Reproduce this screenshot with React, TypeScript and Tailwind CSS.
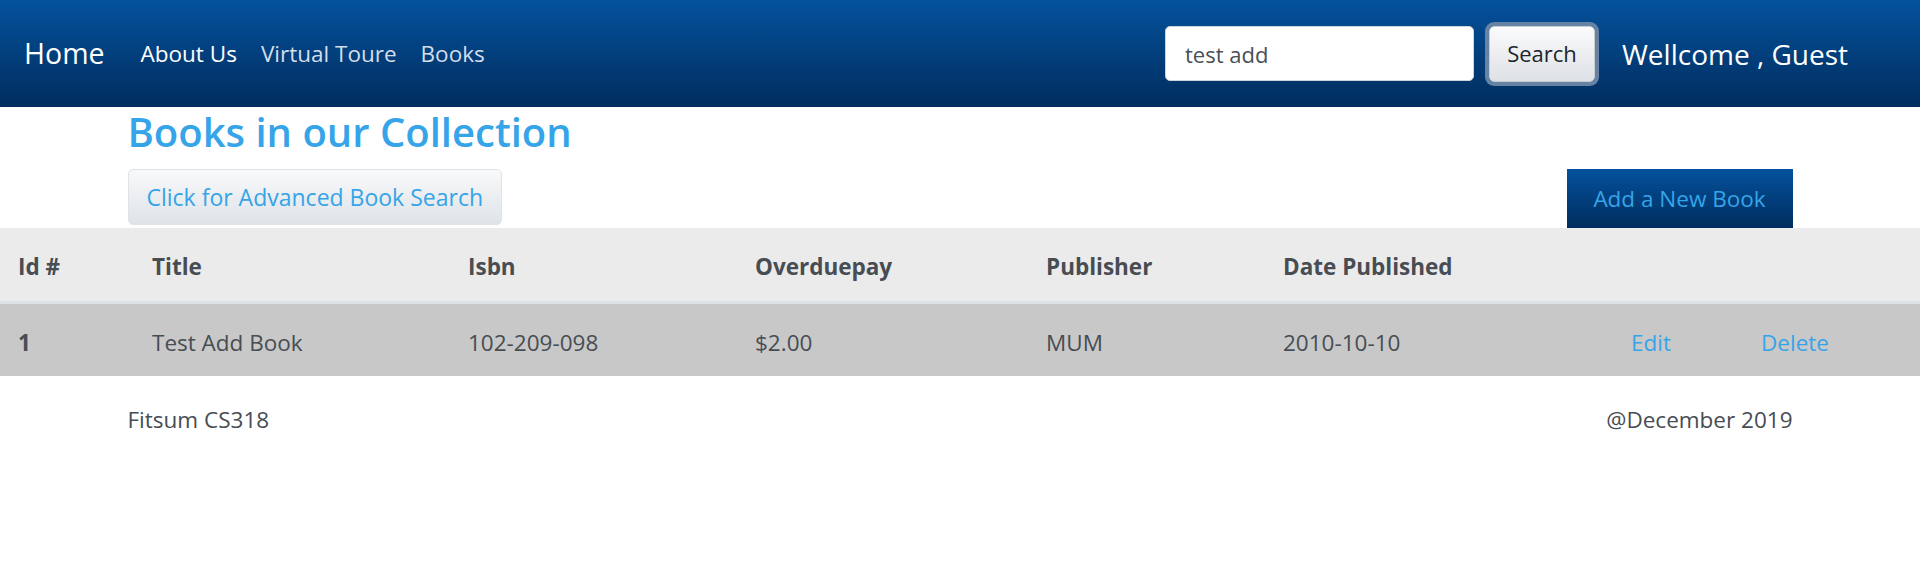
import { useState } from "react";

const books = [
    { id: 1, title: "Test Add Book", isbn: "102-209-098", overduepay: "$2.00", publisher: "MUM", published: "2010-10-10" },
];

export default function App() {
    const [query, setQuery] = useState("test add");

    return (
        <div className="min-h-[561px] bg-white font-['Open_Sans',sans-serif] text-[#474d53]">
            {/* top bar */}
            <header className="flex h-[107px] items-center bg-gradient-to-b from-[#04529d] to-[#012d5e] pl-[24px] pr-[72px] text-white">
                <a href="#" className="text-[28.5px] leading-none">Home</a>
                <nav className="ml-[36px] flex gap-[24px] pt-[2px] text-[22.5px] leading-none">
                    <a href="#" className="text-white">About Us</a>
                    <a href="#" className="text-[#d4deea]">Virtual Toure</a>
                    <a href="#" className="text-[#d4deea]">Books</a>
                </nav>
                <div className="ml-auto flex items-center">
                    <input
                        type="text"
                        value={query}
                        onChange={(e) => setQuery(e.target.value)}
                        className="h-[55px] w-[309px] rounded-[5px] border border-[#ced4da] bg-white px-[19px] text-[22px] text-[#495057] outline-none"
                    />
                    <button className="ml-[15px] h-[56px] w-[106px] rounded-[5px] border border-[#c9ced4] bg-gradient-to-b from-[#fbfbfb] to-[#dde1e6] text-[22px] text-[#212529] ring-[4px] ring-[#6683a4]">
                        Search
                    </button>
                    <span className="ml-[27px] text-[28px] leading-none">Wellcome , Guest</span>
                </div>
            </header>

            <main className="mx-auto w-[1665px]">
                <h2 className="pt-[1px] text-[40px] font-semibold leading-[48px] text-[#36a4e8]">Books in our Collection</h2>
                <div className="mt-[13px] flex items-start justify-between">
                    <button className="h-[56px] rounded-[5px] border border-[#dfe3e8] bg-gradient-to-b from-[#f8f9fa] to-[#dfe3e8] px-[18px] text-[23px] text-[#36a4e8]">
                        Click for Advanced Book Search
                    </button>
                    <button className="h-[59px] w-[226px] bg-gradient-to-b from-[#04529d] to-[#012d5e] text-[22.5px] text-[#36a4e8]">
                        Add a New Book
                    </button>
                </div>
            </main>

            <div className="w-full">
                <div className="grid h-[76px] grid-cols-[134px_316px_287px_291px_237px_348px_130px_1fr] items-center border-b-[3px] border-[#dee2e6] bg-[#ebebeb] pl-[18px] pt-[5px] text-[22.5px] font-bold">
                    <span>Id #</span>
                    <span>Title</span>
                    <span>Isbn</span>
                    <span>Overduepay</span>
                    <span>Publisher</span>
                    <span>Date Published</span>
                    <span></span>
                    <span></span>
                </div>
                {books.map((b) => (
                    <div key={b.id} className="grid h-[72px] grid-cols-[134px_316px_287px_291px_237px_348px_130px_1fr] items-center bg-[#c8c8c8] pl-[18px] pt-[5px] text-[22.5px]">
                        <span className="font-bold">{b.id}</span>
                        <span>{b.title}</span>
                        <span>{b.isbn}</span>
                        <span>{b.overduepay}</span>
                        <span>{b.publisher}</span>
                        <span>{b.published}</span>
                        <a href="#" className="text-[#36a4e8]">Edit</a>
                        <a href="#" className="text-[#36a4e8]">Delete</a>
                    </div>
                ))}
            </div>

            <footer className="mx-auto flex w-[1665px] justify-between pt-[27px] text-[22.5px]">
                <span>Fitsum CS318</span>
                <span>@December 2019</span>
            </footer>
        </div>
    );
}
